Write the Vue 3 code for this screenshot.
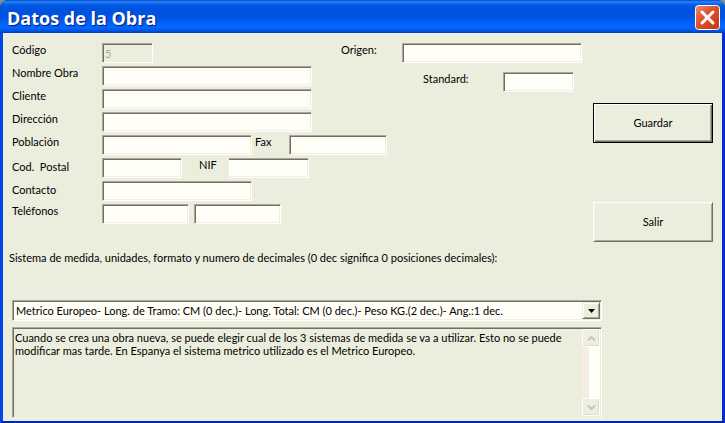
<script setup>
import { ref } from 'vue';

const obra = ref({
  codigo: '5',
  nombre: '',
  cliente: '',
  direccion: '',
  poblacion: '',
  fax: '',
  codPostal: '',
  nif: '',
  contacto: '',
  telefono1: '',
  telefono2: '',
  origen: '',
  standard: '',
});

const sistemas = [
  'Metrico Europeo- Long. de Tramo: CM (0 dec.)- Long. Total: CM (0 dec.)- Peso KG.(2 dec.)- Ang.:1 dec.',
];
const sistema = ref(sistemas[0]);

const ayuda =
  'Cuando se crea una obra nueva, se puede elegir cual de los 3 sistemas de medida se va a utilizar. Esto no se puede modificar mas tarde. En Espanya el sistema metrico utilizado es el Metrico Europeo.';

const visible = ref(true);

function guardar() {
  console.log('guardar', obra.value, sistema.value);
}

function salir() {
  visible.value = false;
}
</script>

<template>
  <div v-if="visible" class="window">
    <header class="titlebar">
      <h1>Datos de la Obra</h1>
      <button type="button" class="close" aria-label="Cerrar" @click="salir">
        <svg viewBox="0 0 25 25" width="25" height="25">
          <defs>
            <linearGradient id="closeFill" x1="0" y1="0" x2="1" y2="1">
              <stop offset="0" stop-color="#ee9078" />
              <stop offset="0.4" stop-color="#e0532f" />
              <stop offset="1" stop-color="#c8340c" />
            </linearGradient>
          </defs>
          <rect x="0.5" y="0.5" width="24" height="24" rx="3" fill="url(#closeFill)" stroke="#fff" />
          <path d="M7 7L18 18M18 7L7 18" stroke="#fff" stroke-width="3" stroke-linecap="round" />
        </svg>
      </button>
    </header>

    <form class="body" @submit.prevent="guardar">
      <div class="top">
        <div class="fields">
          <div class="row">
            <label for="codigo">Código</label>
            <input id="codigo" v-model="obra.codigo" class="w-codigo" type="text" disabled />
          </div>
          <div class="row">
            <label for="nombre">Nombre Obra</label>
            <input id="nombre" v-model="obra.nombre" class="w-long" type="text" />
          </div>
          <div class="row">
            <label for="cliente">Cliente</label>
            <input id="cliente" v-model="obra.cliente" class="w-long" type="text" />
          </div>
          <div class="row">
            <label for="direccion">Dirección</label>
            <input id="direccion" v-model="obra.direccion" class="w-long" type="text" />
          </div>
          <div class="row wide">
            <label for="poblacion">Población</label>
            <input id="poblacion" v-model="obra.poblacion" class="w-medium" type="text" />
            <label for="fax" class="fax">Fax</label>
            <input id="fax" v-model="obra.fax" class="w-fax" type="text" />
          </div>
          <div class="row wide low">
            <label for="postal">Cod.&nbsp; Postal</label>
            <input id="postal" v-model="obra.codPostal" class="w-short" type="text" />
            <label for="nif" class="nif">NIF</label>
            <input id="nif" v-model="obra.nif" class="w-short open" type="text" />
          </div>
          <div class="row low">
            <label for="contacto">Contacto</label>
            <input id="contacto" v-model="obra.contacto" class="w-medium" type="text" />
          </div>
          <div class="row">
            <label for="telefono1">Teléfonos</label>
            <input id="telefono1" v-model="obra.telefono1" class="w-phone" type="text" />
            <input id="telefono2" v-model="obra.telefono2" class="w-phone second" type="text" aria-label="Teléfono 2" />
          </div>

          <div class="extra">
            <div class="row">
              <label for="origen" class="origen">Origen:</label>
              <input id="origen" v-model="obra.origen" class="grow" type="text" />
            </div>
            <div class="row standard">
              <label for="standard">Standard:</label>
              <input id="standard" v-model="obra.standard" class="w-standard" type="text" />
            </div>
          </div>
        </div>

        <div class="actions">
          <button type="submit" class="btn default">Guardar</button>
          <button type="button" class="btn" @click="salir">Salir</button>
        </div>
      </div>

      <div class="system">
        <label for="sistema">Sistema de medida, unidades, formato y numero de decimales (0 dec significa 0 posiciones decimales):</label>
        <div class="combo">
          <select id="sistema" v-model="sistema">
            <option v-for="s in sistemas" :key="s" :value="s">{{ s }}</option>
          </select>
          <span class="arrow">
            <svg viewBox="0 0 7 4" width="7" height="4"><path d="M0 0H7L3.5 4Z" fill="#000" /></svg>
          </span>
        </div>
        <div class="help">
          <textarea :value="ayuda" readonly aria-label="Ayuda"></textarea>
          <div class="scrollbar">
            <button type="button" disabled aria-label="Subir">
              <svg viewBox="0 0 9 7" width="9" height="7"><path d="M1 5.5L4.5 2L8 5.5" /></svg>
            </button>
            <button type="button" disabled aria-label="Bajar">
              <svg viewBox="0 0 9 7" width="9" height="7"><path d="M1 1.5L4.5 5L8 1.5" /></svg>
            </button>
          </div>
        </div>
      </div>
    </form>
  </div>
</template>

<style>
body {
  background: #8d8d8d;
}
</style>

<style scoped>
* {
  box-sizing: border-box;
}
.window {
  min-height: 100vh;
  display: flex;
  flex-direction: column;
  border-radius: 8px 8px 0 0;
  overflow: hidden;
  background: #0039d6;
  font-family: Lato, 'Liberation Sans', Arial, sans-serif;
  font-size: 11px;
  line-height: 14px;
  color: #000;
}
.titlebar {
  display: flex;
  align-items: center;
  justify-content: space-between;
  height: 33px;
  padding: 2px 5px 0 7px;
  background: linear-gradient(#0a48c8 0, #2a86fa 2px, #0562ec 4px, #0052dd 8px, #0054e3 18px, #0063fb 24px, #0068ff 28px, #0050e0 31px, #0039c0 33px);
}
h1 {
  margin: 0;
  font-family: 'Open Sans', 'Noto Sans', sans-serif;
  font-size: 18px;
  line-height: 24px;
  font-weight: 700;
  color: #fff;
  text-shadow: 1px 1px 1px #0a1883;
}
.close {
  width: 25px;
  height: 25px;
  padding: 0;
  border: 0;
  background: none;
}
.close svg {
  display: block;
}
.body {
  flex: 1;
  padding: 10px 9px 3px;
  background: #eceedd;
  border: solid #0046e8;
  border-width: 0 3px 3px;
  border-right-color: #0030cc;
  border-bottom-color: #0026b4;
}
.top {
  display: flex;
  gap: 11px;
}
.fields {
  flex: 1;
  display: grid;
  grid-template-columns: 329px 1fr;
  grid-auto-rows: 20px;
  row-gap: 3px;
  align-content: start;
}
.row {
  grid-column: 1;
  display: flex;
  align-items: flex-start;
}
.row.wide {
  grid-column: 1 / 3;
}
.row label {
  flex: none;
  width: 90px;
}
.row.low label:first-child {
  padding-top: 2px;
}
.row label.fax {
  width: 37px;
  padding-left: 3px;
}
.row label.nif {
  width: 47px;
  padding-left: 17px;
}
.row label.origen {
  width: 61px;
}
.extra {
  grid-column: 2;
  grid-row: 1 / span 3;
  display: flex;
  flex-direction: column;
  gap: 9px;
}
.standard {
  padding-left: 82px;
}
.standard label {
  width: 80px;
}
input {
  height: 20px;
  min-width: 0;
  padding: 0 2px;
  font: inherit;
  background: #fffff7;
  border: 1px solid;
  border-color: #aca899 #fff #fff #aca899;
  border-radius: 0;
  box-shadow: inset 1px 1px #716f64, inset -1px -1px #f5ece6;
  outline: 0;
}
input:disabled {
  color: #aca899;
  background: #eceedd;
  box-shadow: inset 1px 1px #716f64;
}
input.open {
  border-left: 0;
  box-shadow: inset 0 1px #716f64, inset -1px -1px #f5ece6;
}
.w-codigo {
  width: 51px;
}
.w-long {
  width: 210px;
}
.w-medium {
  width: 150px;
}
.w-fax {
  width: 98px;
}
.w-short {
  width: 80px;
}
.w-phone {
  width: 87px;
}
.w-standard {
  width: 71px;
}
.second {
  margin-left: 5px;
}
.grow {
  flex: 1;
}
.actions {
  display: flex;
  flex-direction: column;
  gap: 59px;
  width: 120px;
  padding-top: 60px;
}
.btn {
  height: 40px;
  padding: 0;
  font: inherit;
  color: #000;
  background: #eceedd;
  border: 1px solid;
  border-color: #fff #716f64 #716f64 #fff;
  border-radius: 0;
  box-shadow: inset 1px 1px #f3eee4, inset -1px -1px #aca899;
}
.btn.default {
  border-color: #000;
  box-shadow: inset 1px 1px #fff, inset -1px -1px #716f64, inset -2px -2px #aca899;
}
.system {
  display: flex;
  flex-direction: column;
  width: calc(100% - 111px);
  padding-top: 9px;
}
.system > label {
  margin: 0 0 35px -3px;
  white-space: nowrap;
}
.combo {
  position: relative;
  height: 21px;
  border: 1px solid;
  border-color: #aca899 #fff #fff #aca899;
  background: #fffff7;
  box-shadow: inset 1px 1px #716f64, inset -1px -1px #f5ece6;
}
select {
  display: block;
  width: 100%;
  height: 19px;
  padding: 0 20px 0 3px;
  font: inherit;
  color: #000;
  background: none;
  border: 0;
  appearance: none;
  outline: 0;
}
.arrow {
  position: absolute;
  top: 1px;
  right: 1px;
  display: flex;
  align-items: center;
  justify-content: center;
  width: 18px;
  height: 17px;
  background: #eceedd;
  border: 1px solid;
  border-color: #eceedd #716f64 #716f64 #eceedd;
  box-shadow: inset 1px 1px #fff, inset -1px -1px #aca899;
  pointer-events: none;
}
.help {
  display: flex;
  height: 91px;
  margin-top: 6px;
  border: 1px solid;
  border-color: #aca899 #fff #f5f2e8 #aca899;
  box-shadow: inset 1px 1px #716f64;
  padding: 1px;
}
textarea {
  flex: 1;
  padding: 2px 1px;
  font: inherit;
  line-height: 13px;
  color: #000;
  background: none;
  border: 0;
  outline: 0;
  resize: none;
  overflow: hidden;
}
.scrollbar {
  display: flex;
  flex-direction: column;
  justify-content: space-between;
  width: 18px;
  background: linear-gradient(90deg, #f5ece6 7px, #fffff7 7px);
}
.scrollbar button {
  display: flex;
  align-items: center;
  justify-content: center;
  height: 18px;
  padding: 0;
  background: #eeeee2;
  border: 1px solid #fff;
  border-radius: 2px;
  box-shadow: inset -1px -1px #dcdccb;
}
.scrollbar path {
  fill: none;
  stroke: #c9c7b0;
  stroke-width: 2;
}
</style>
